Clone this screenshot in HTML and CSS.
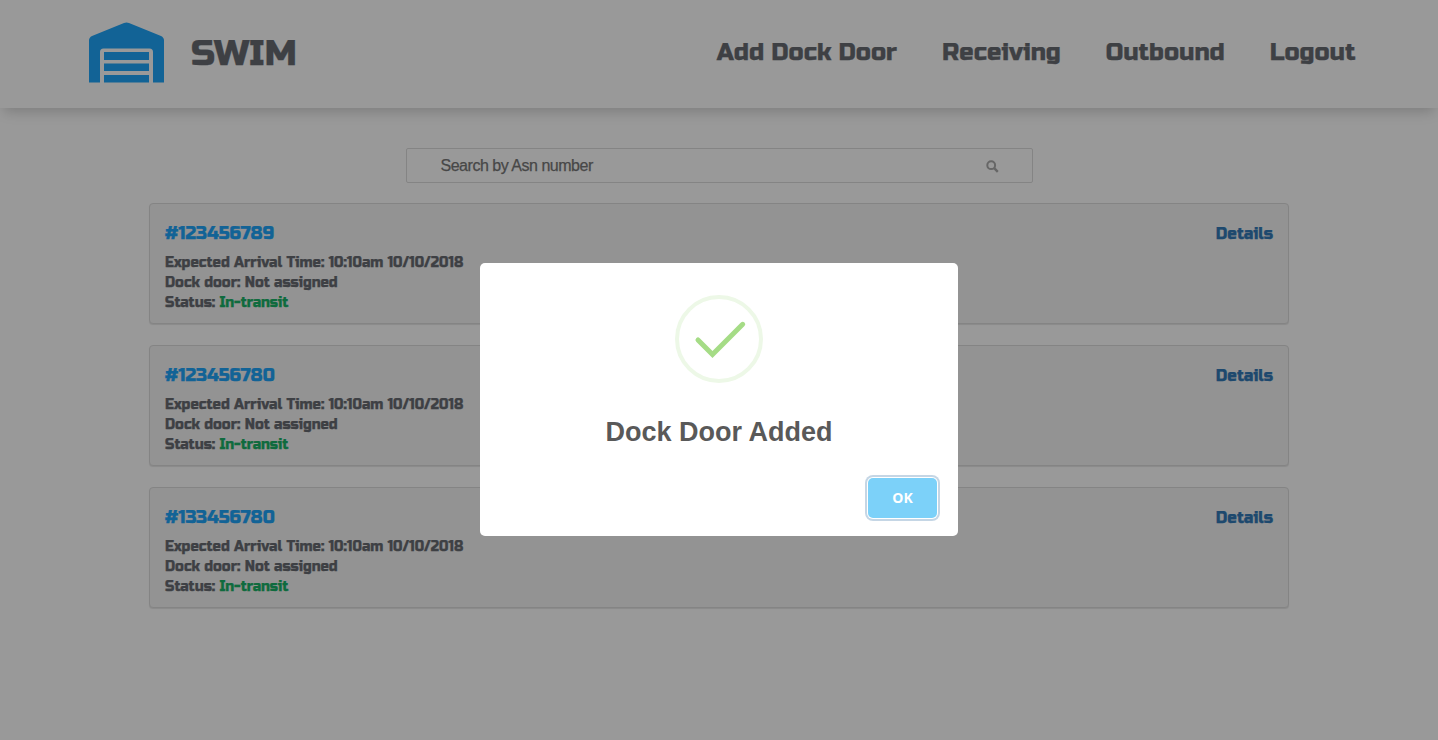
FILE: index.html
```html
<!DOCTYPE html>
<html lang="en">
<head>
<meta charset="utf-8">
<title>SWIM</title>
<link rel="stylesheet" href="styles.css">
</head>
<body>
<header class="header">
  <div class="brand">
    <svg class="logo" width="75" height="61" viewBox="0 0 75 61">
      <path fill="currentColor" d="M0 60.500V18.500Q0 15.500 3 14L35 1Q37.500 0 40 1L72 14Q75 15.500 75 18.500V60.500H64V30Q64 26.500 60.500 26.500H14.500Q11 26.500 11 30V60.500Z"/>
      <path fill="currentColor" d="M15 30h45v8H15zM15 41.500h45v7.500H15zM15 53h45V60.500H15z"/>
    </svg>
    <span class="brand-name">SWIM</span>
  </div>
  <nav class="nav">
    <a>Add Dock Door</a>
    <a>Receiving</a>
    <a>Outbound</a>
    <a>Logout</a>
  </nav>
</header>
<main class="main">
  <div class="search">
    <span>Search by Asn number</span>
    <svg class="search-icon" width="13" height="13" viewBox="0 0 13 13"><circle cx="5.200" cy="5.200" r="3.900" fill="none" stroke="#aaa" stroke-width="2"/><path d="M8.200 8.200L11.800 11.800" stroke="#aaa" stroke-width="2.400"/></svg>
  </div>
  <section class="card">
    <div>
      <h2 class="asn">#123456789</h2>
      <p>Expected Arrival Time: 10:10am 10/10/2018</p>
      <p>Dock door: Not assigned</p>
      <p>Status: <span class="transit">In-transit</span></p>
    </div>
    <a class="details">Details</a>
  </section>
  <section class="card">
    <div>
      <h2 class="asn">#123456780</h2>
      <p>Expected Arrival Time: 10:10am 10/10/2018</p>
      <p>Dock door: Not assigned</p>
      <p>Status: <span class="transit">In-transit</span></p>
    </div>
    <a class="details">Details</a>
  </section>
  <section class="card">
    <div>
      <h2 class="asn">#133456780</h2>
      <p>Expected Arrival Time: 10:10am 10/10/2018</p>
      <p>Dock door: Not assigned</p>
      <p>Status: <span class="transit">In-transit</span></p>
    </div>
    <a class="details">Details</a>
  </section>
</main>
<div class="overlay">
  <div class="modal">
    <svg class="check" width="88" height="88" viewBox="0 0 88 88" fill="none">
      <circle cx="44" cy="44" r="42" stroke="#edf8e7" stroke-width="4"/>
      <path d="M23 45L37.500 59.500L67.700 29.300" stroke="#a5dc86" stroke-width="5" stroke-linecap="round"/>
    </svg>
    <div class="modal-title">Dock Door Added</div>
    <div class="modal-footer"><button class="ok">OK</button></div>
  </div>
</div>
</body>
</html>
```

FILE: styles.css
```css
* { box-sizing: border-box; }
body {
  margin: 0;
  height: 740px;
  overflow: hidden;
  background: #fff;
  color: #686b72;
  font-family: "Russo One", Inter, sans-serif;
  font-weight: 400;
  -webkit-text-stroke: .25px currentColor;
}
.header {
  height: 108px;
  display: flex;
  justify-content: space-between;
  padding: 0 82.5px 0 89px;
  box-shadow: 0 8px 12px -4px rgba(0, 0, 0, .18);
}
.brand { display: flex; color: #1ea5fa; }
.logo { margin-top: 22px; }
.brand-name {
  margin: 31px 0 0 27px;
  color: #686b72;
  font-size: 36px;
  line-height: 46px;
}
.nav {
  display: flex;
  gap: 45px;
  padding-top: 37px;
  font-size: 24px;
  line-height: 32px;
  white-space: nowrap;
}
.main {
  width: 1140px;
  margin: 40px auto 0;
}
.search {
  width: 627px;
  height: 35px;
  margin: 0 auto 20px;
  padding: 0 33px 0 34px;
  display: flex;
  align-items: center;
  justify-content: space-between;
  border: 1px solid #ddd;
  border-radius: 2px;
  color: #777;
  font: 400 16px/33px "Liberation Sans", Arial, sans-serif;
  letter-spacing: -.48px;
}
.search-icon { margin-top: 2px; }
.card {
  height: 121px;
  margin-bottom: 21px;
  padding: 19px 15px 0;
  display: flex;
  justify-content: space-between;
  background: #f5f5f5;
  border: 1px solid #ddd;
  border-radius: 4px;
  box-shadow: 0 1px 1px rgba(0, 0, 0, .1);
}
.asn {
  margin: 0 0 9px;
  color: #1ea5fa;
  font-size: 18px;
  font-weight: 400;
  line-height: 21px;
}
.card p { margin: 0; font-size: 14px; line-height: 20px; white-space: nowrap; }
.transit { color: #19b268; -webkit-text-stroke-color: #19b268; }
.asn, .details, .brand-name { -webkit-text-stroke-color: currentColor; }
.details { color: #337ab7; font-size: 16px; line-height: 22px; }
.overlay {
  position: fixed;
  inset: 0;
  padding-top: 263px;
  background: rgba(0, 0, 0, .4);
  -webkit-text-stroke: 0;
}
.modal {
  width: 478px;
  height: 273px;
  margin: 0 auto;
  padding: 32px 18px 0;
  display: flex;
  flex-direction: column;
  background: #fff;
  border-radius: 5px;
}
.check { align-self: center; }
.modal-title {
  margin-top: 31px;
  color: #595959;
  font: 700 27px/36px "Liberation Sans", Arial, sans-serif;
  text-align: center;
}
.modal-footer {
  display: flex;
  justify-content: flex-end;
  margin-top: 28px;
  padding-right: 3px;
}
.ok {
  width: 69px;
  height: 40px;
  padding: 0 0 2px;
  color: #fff;
  background: #7cd1f9;
  border: 0;
  border-radius: 5px;
  box-shadow: 0 0 0 1px #fff, 0 0 0 3px #c5d6e5;
  font: 700 14px "Open Sans", sans-serif;
}
```
